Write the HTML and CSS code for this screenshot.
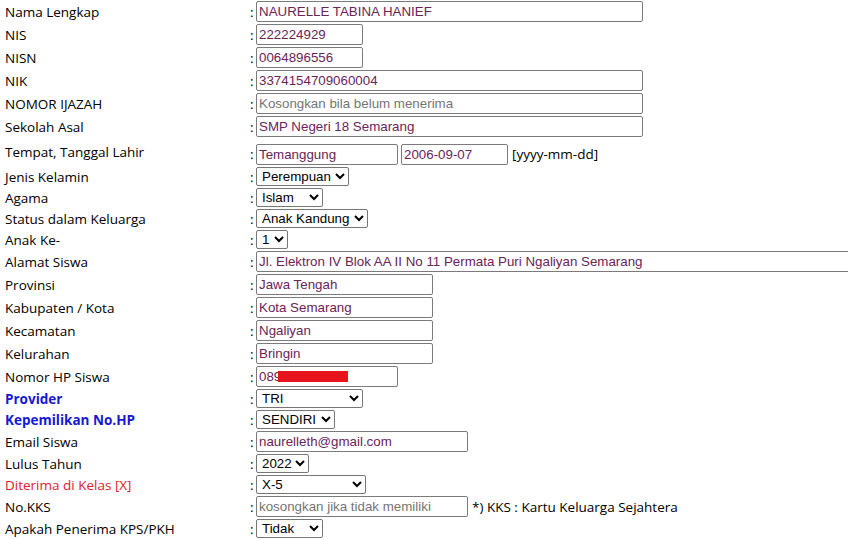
FILE: index.html
```html
<!DOCTYPE html>
<html>
<head>
<meta charset="utf-8">
<link rel="stylesheet" href="styles.css">
</head>
<body>
<div class="form">
  <div class="row in"><div class="lbl">Nama Lengkap</div><div class="fld"><span class="colon">:</span><input class="txt w-xl" value="NAURELLE TABINA HANIEF"></div></div>
  <div class="row in"><div class="lbl">NIS</div><div class="fld"><span class="colon">:</span><input class="txt w-s" value="222224929"></div></div>
  <div class="row in"><div class="lbl">NISN</div><div class="fld"><span class="colon">:</span><input class="txt w-s" value="0064896556"></div></div>
  <div class="row in"><div class="lbl">NIK</div><div class="fld"><span class="colon">:</span><input class="txt w-xl" value="3374154709060004"></div></div>
  <div class="row in"><div class="lbl">NOMOR IJAZAH</div><div class="fld"><span class="colon">:</span><input class="txt w-xl" placeholder="Kosongkan bila belum menerima"></div></div>
  <div class="row in"><div class="lbl">Sekolah Asal</div><div class="fld"><span class="colon">:</span><input class="txt w-xl" value="SMP Negeri 18 Semarang"></div></div>
  <div class="row ttl"><div class="lbl">Tempat, Tanggal Lahir</div><div class="fld"><span class="colon">:</span><input class="txt w-m" value="Temanggung"><input class="txt w-s date" value="2006-09-07"><span class="note">[yyyy-mm-dd]</span></div></div>
  <div class="row sel"><div class="lbl">Jenis Kelamin</div><div class="fld"><span class="colon">:</span><select class="dd w-jk"><option>Perempuan</option></select></div></div>
  <div class="row sel"><div class="lbl">Agama</div><div class="fld"><span class="colon">:</span><select class="dd w-ag"><option>Islam</option></select></div></div>
  <div class="row sel"><div class="lbl">Status dalam Keluarga</div><div class="fld"><span class="colon">:</span><select class="dd w-st"><option>Anak Kandung</option></select></div></div>
  <div class="row sel"><div class="lbl">Anak Ke-</div><div class="fld"><span class="colon">:</span><select class="dd w-ak"><option>1</option></select></div></div>
  <div class="row in"><div class="lbl">Alamat Siswa</div><div class="fld"><span class="colon">:</span><input class="txt w-xxl" value="Jl. Elektron IV Blok AA II No 11 Permata Puri Ngaliyan Semarang"></div></div>
  <div class="row in"><div class="lbl">Provinsi</div><div class="fld"><span class="colon">:</span><input class="txt w-l" value="Jawa Tengah"></div></div>
  <div class="row in"><div class="lbl">Kabupaten / Kota</div><div class="fld"><span class="colon">:</span><input class="txt w-l" value="Kota Semarang"></div></div>
  <div class="row in"><div class="lbl">Kecamatan</div><div class="fld"><span class="colon">:</span><input class="txt w-l" value="Ngaliyan"></div></div>
  <div class="row in"><div class="lbl">Kelurahan</div><div class="fld"><span class="colon">:</span><input class="txt w-l" value="Bringin"></div></div>
  <div class="row in"><div class="lbl">Nomor HP Siswa</div><div class="fld"><span class="colon">:</span><span class="hpwrap"><input class="txt w-m" value="089"><span class="redact"></span></span></div></div>
  <div class="row sel"><div class="lbl blue">Provider</div><div class="fld"><span class="colon">:</span><select class="dd w-pv"><option>TRI</option></select></div></div>
  <div class="row sel"><div class="lbl blue">Kepemilikan No.HP</div><div class="fld"><span class="colon">:</span><select class="dd w-kp"><option>SENDIRI</option></select></div></div>
  <div class="row in"><div class="lbl">Email Siswa</div><div class="fld"><span class="colon">:</span><input class="txt w-e" value="naurelleth@gmail.com"></div></div>
  <div class="row sel"><div class="lbl">Lulus Tahun</div><div class="fld"><span class="colon">:</span><select class="dd w-lt"><option>2022</option></select></div></div>
  <div class="row sel"><div class="lbl red">Diterima di Kelas [X]</div><div class="fld"><span class="colon">:</span><select class="dd w-dk"><option>X-5</option></select></div></div>
  <div class="row in"><div class="lbl">No.KKS</div><div class="fld"><span class="colon">:</span><input class="txt w-e" placeholder="kosongkan jika tidak memiliki"><span class="note kks">*) KKS : Kartu Keluarga Sejahtera</span></div></div>
  <div class="row sel"><div class="lbl">Apakah Penerima KPS/PKH</div><div class="fld"><span class="colon">:</span><select class="dd w-ag"><option>Tidak</option></select></div></div>
</div>
</body>
</html>
```

FILE: styles.css
```css
html, body {
  margin: 0;
  padding: 0;
  background: #fff;
  overflow: hidden;
}
body {
  font-family: "Open Sans", "Noto Sans", sans-serif;
  font-size: 13.5px;
  color: #000;
}
.form {
  display: flex;
  flex-direction: column;
  padding-left: 5px;
  width: 843px;
  overflow: hidden;
}
.row {
  display: flex;
  align-items: center;
}
.row.in { height: 23px; }
.row.sel { height: 21px; }
.row.ttl { height: 28px; }
.row.ttl .fld { padding-top: 4px; }
.lbl {
  width: 245px;
  flex: none;
  white-space: nowrap;
}
.lbl.blue { color: #1717d4; font-weight: bold; }
.lbl.red { color: #e0202a; }
.fld {
  display: flex;
  align-items: center;
  white-space: nowrap;
}
.colon {
  width: 6px;
  flex: none;
}
.txt {
  box-sizing: border-box;
  height: 21px;
  border: 1px solid #7b7b7b;
  border-radius: 2px;
  padding: 1px 2px;
  font-family: "Liberation Sans", Arial, sans-serif;
  font-size: 13.33px;
  color: #6b2458;
  background: #fff;
  margin: 0;
  outline: none;
}
.txt::placeholder { color: #757575; }
.dd {
  box-sizing: border-box;
  height: 19px;
  border: 1px solid #767676;
  border-radius: 2px;
  font-family: "Liberation Sans", Arial, sans-serif;
  font-size: 13.33px;
  color: #000;
  background-color: #fff;
  margin: 0;
  padding: 0 0 0 1px;
}
.w-xl { width: 387px; }
.w-xxl { width: 620px; }
.w-s { width: 107px; }
.w-m { width: 142px; }
.w-l { width: 177px; }
.w-e { width: 212px; }
.date { margin-left: 3px; }
.note { margin-left: 4px; }
.w-jk { width: 93px; }
.w-ag { width: 67px; }
.w-st { width: 112px; }
.w-ak { width: 32px; }
.w-pv { width: 107px; }
.w-kp { width: 79px; }
.w-lt { width: 53px; }
.w-dk { width: 110px; }
.hpwrap {
  position: relative;
  display: inline-flex;
}
.redact {
  position: absolute;
  left: 22px;
  top: 5px;
  width: 70px;
  height: 11px;
  background: #e8141c;
}
```
